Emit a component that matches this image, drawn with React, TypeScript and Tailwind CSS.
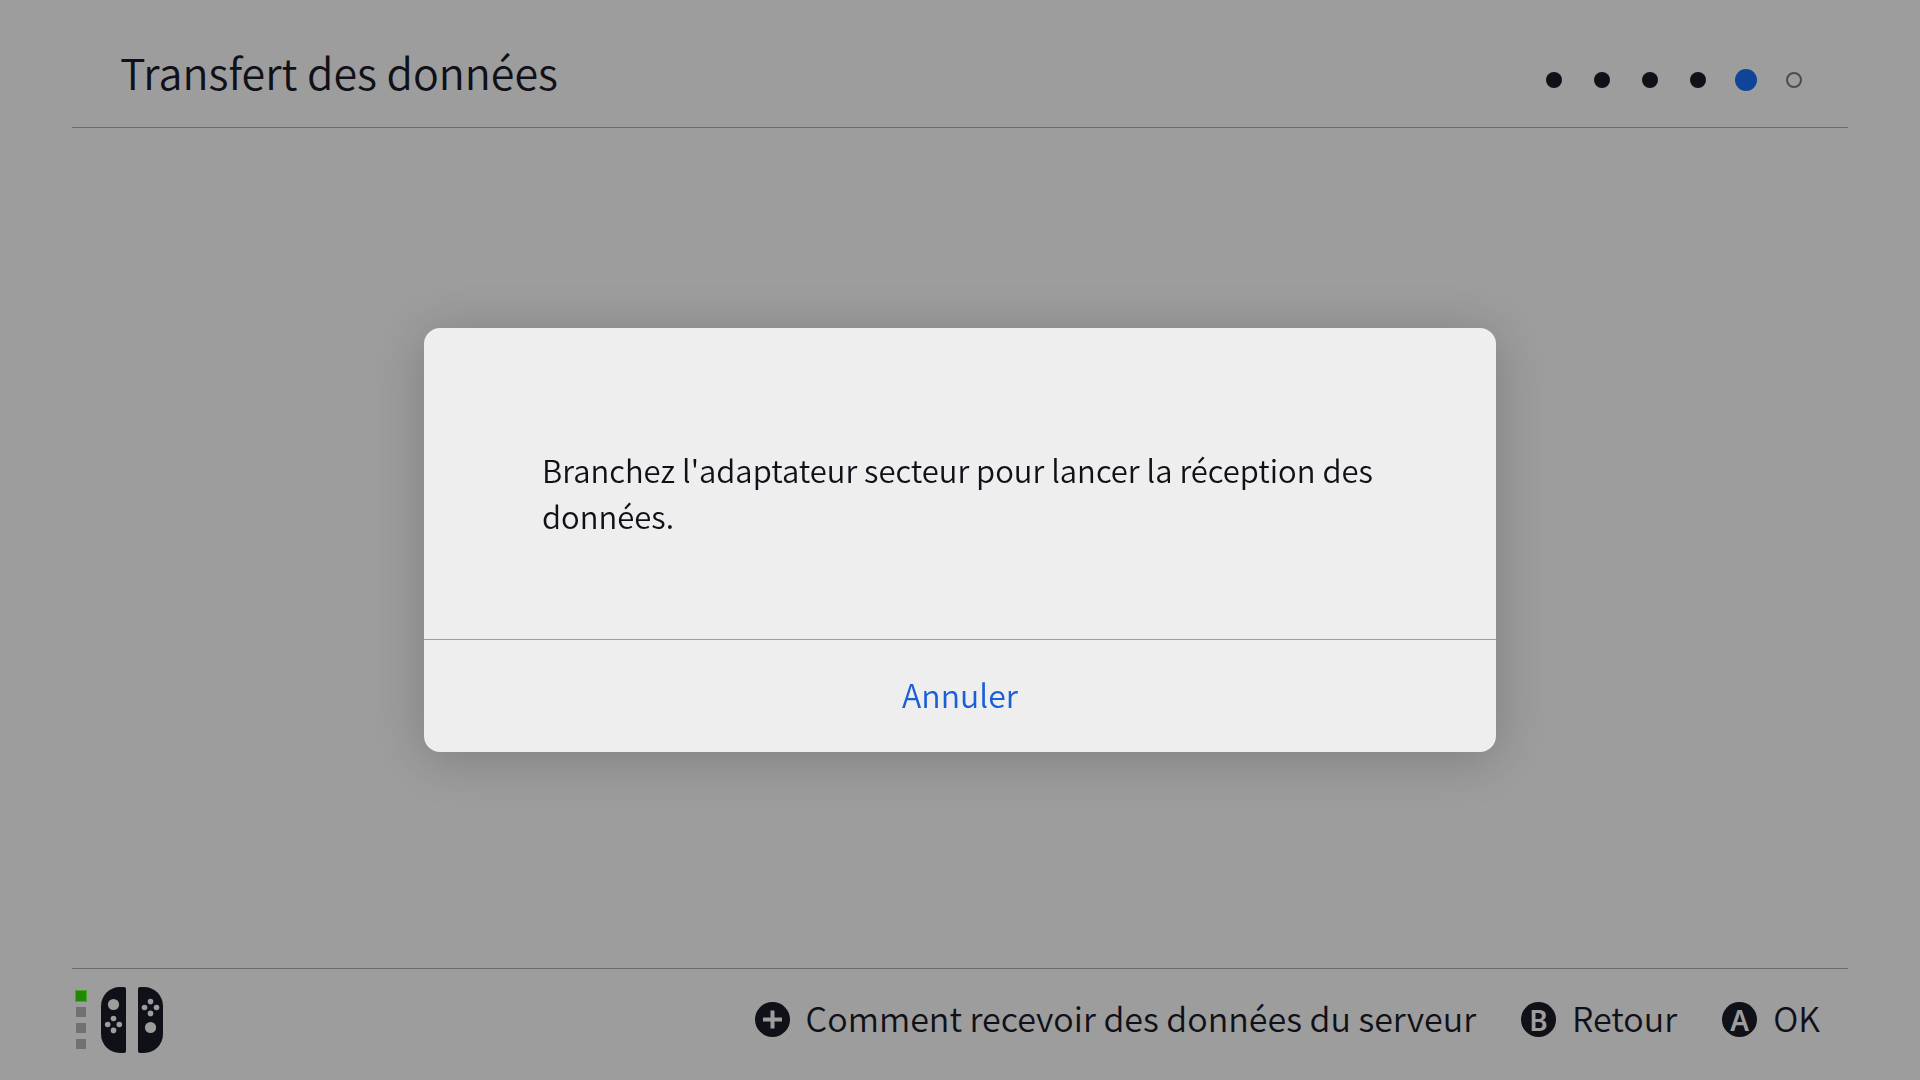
import React from "react";

type StepState = "done" | "current" | "todo";

const steps: StepState[] = ["done", "done", "done", "done", "current", "todo"];

const stepStyles: Record<StepState, string> = {
  done: "size-4 rounded-full bg-[#101018]",
  current: "size-[22px] rounded-full bg-[#0f4499]",
  todo: "size-4 rounded-full border-2 border-[#4c4c4c]",
};

function StepIndicator() {
  return (
    <ol aria-label="Étapes" className="flex items-center">
      {steps.map((state, i) => (
        <li
          key={i}
          aria-current={state === "current" ? "step" : undefined}
          className="flex w-12 items-center justify-center"
        >
          <span className={stepStyles[state]} />
        </li>
      ))}
    </ol>
  );
}

function PlayerLights() {
  return (
    <div className="flex flex-col gap-1.5">
      <span className="size-2.5 bg-[#208a00] ring-1 ring-[#4aa52c]" />
      <span className="size-2.5 bg-[#717171]" />
      <span className="size-2.5 bg-[#717171]" />
      <span className="size-2.5 bg-[#717171]" />
    </div>
  );
}

function ControllerIcon() {
  return (
    <svg width="62" height="66" viewBox="0 0 62 66" aria-hidden="true">
      <g fill="#101018">
        <path d="M19 0H23Q25 0 25 2V64Q25 66 23 66H19A19 19 0 0 1 0 47V19A19 19 0 0 1 19 0Z" />
        <path d="M43 0H39Q37 0 37 2V64Q37 66 39 66H43A19 19 0 0 0 62 47V19A19 19 0 0 0 43 0Z" />
      </g>
      <g fill="#9d9d9d">
        <circle cx="12.5" cy="17.5" r="5.6" />
        <circle cx="12.5" cy="31.5" r="2.8" />
        <circle cx="6.7" cy="37.5" r="2.8" />
        <circle cx="18.3" cy="37.5" r="2.8" />
        <circle cx="12.5" cy="43.4" r="2.8" />
        <circle cx="49.5" cy="14.6" r="2.8" />
        <circle cx="43.5" cy="20.5" r="2.8" />
        <circle cx="55.5" cy="20.5" r="2.8" />
        <circle cx="49.5" cy="26.4" r="2.8" />
        <circle cx="49.5" cy="40.5" r="5.6" />
      </g>
    </svg>
  );
}

function ActionHint({ glyph, label }: { glyph: React.ReactNode; label: string }) {
  return (
    <button type="button" className="flex items-center gap-4">
      <span className="flex size-[35px] items-center justify-center rounded-full bg-[#101018] font-['Noto_Sans',sans-serif] text-[28px] leading-none font-semibold text-[#9d9d9d]">
        {glyph}
      </span>
      <span className="pb-1">{label}</span>
    </button>
  );
}

function PlusGlyph() {
  return (
    <svg width="19" height="19" viewBox="0 0 19 19" aria-hidden="true">
      <path d="M7.5 0.5H11.5V7.5H19V11.5H11.5V18.5H7.5V11.5H0V7.5H7.5Z" fill="#9d9d9d" />
    </svg>
  );
}

export default function App() {
  return (
    <div className="flex min-h-screen flex-col bg-[#9d9d9d] px-18 font-['Noto_Sans_CJK_JP',sans-serif] font-[350] text-[#101018]">
      <header className="flex h-32 items-center justify-between border-b border-[#6b6b6b] pr-[30px] pl-12">
        <h1 className="pt-4 text-[43px] leading-none">Transfert des données</h1>
        <div className="pt-8">
          <StepIndicator />
        </div>
      </header>

      <main className="flex flex-1 flex-col">
        <div className="fixed inset-0 z-10 flex items-center justify-center">
          <section
            role="dialog"
            aria-modal="true"
            aria-labelledby="dialog-message"
            className="flex w-[1072px] flex-col overflow-hidden rounded-2xl bg-[#eeeeee] shadow-[0_6px_52px_rgba(0,0,0,0.2)]"
          >
            <p
              id="dialog-message"
              className="flex min-h-[311px] items-center pt-[18px] pr-24 pl-[118px] text-[31px] leading-[46px]"
            >
              Branchez l'adaptateur secteur pour lancer la réception des données.
            </p>
            <button
              type="button"
              className="h-[113px] border-t border-[#9f9f9f] pb-1 text-[32px] text-[#1a5fd8]"
            >
              Annuler
            </button>
          </section>
        </div>
      </main>

      <footer className="flex h-28 items-center justify-between border-t border-[#6b6b6b] pr-7 pb-2.5 pl-1">
        <div className="flex items-center gap-[15px]">
          <PlayerLights />
          <ControllerIcon />
        </div>
        <nav aria-label="Commandes" className="flex items-center gap-[45px] text-[34px] leading-none">
          <ActionHint glyph={<PlusGlyph />} label="Comment recevoir des données du serveur" />
          <ActionHint glyph="B" label="Retour" />
          <ActionHint glyph="A" label="OK" />
        </nav>
      </footer>
    </div>
  );
}
